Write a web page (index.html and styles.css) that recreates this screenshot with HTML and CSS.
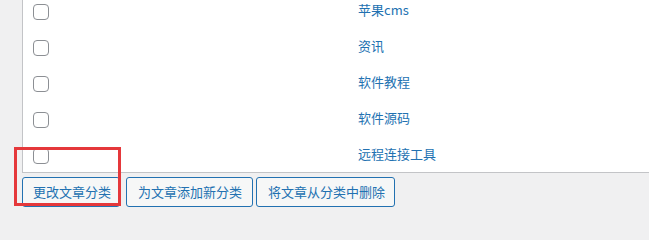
FILE: index.html
```html
<!DOCTYPE html>
<html lang="zh-CN">
<head>
<meta charset="utf-8">
<title>分类</title>
<link rel="stylesheet" href="styles.css">
</head>
<body>
<div class="page">
  <div class="panel">
    <ul class="list">
      <li class="row"><span class="cb"></span><span class="label">苹果cms</span></li>
      <li class="row"><span class="cb"></span><span class="label">资讯</span></li>
      <li class="row"><span class="cb"></span><span class="label">软件教程</span></li>
      <li class="row"><span class="cb"></span><span class="label">软件源码</span></li>
      <li class="row"><span class="cb"></span><span class="label">远程连接工具</span></li>
    </ul>
  </div>
  <div class="actions">
    <button class="btn btn-first">更改文章分类</button>
    <button class="btn btn-second">为文章添加新分类</button>
    <button class="btn btn-third">将文章从分类中删除</button>
  </div>
  <div class="highlight"></div>
</div>
</body>
</html>
```
FILE: styles.css
```css
html, body {
  margin: 0;
  padding: 0;
  background: #f0f0f1;
  overflow: hidden;
  width: 649px;
  height: 230px;
}
body {
  font-family: "Noto Sans CJK SC", "Noto Sans", sans-serif;
  font-size: 13px;
}
.page {
  position: relative;
  padding-left: 22px;
}
.panel {
  margin-top: -6px;
  height: 178px;
  background: #fff;
  border-left: 1px solid #c3c4c7;
  border-bottom: 1px solid #c3c4c7;
  overflow: hidden;
}
.list {
  list-style: none;
  margin: 0;
  padding: 0;
}
.row {
  display: grid;
  grid-template-columns: 16px auto;
  column-gap: 309px;
  align-items: center;
  height: 36px;
  padding-left: 10px;
}
.cb {
  display: block;
  width: 14px;
  height: 14px;
  border: 1px solid #8c8f94;
  border-radius: 4px;
  background: #fff;
}
.label {
  color: #2271b1;
  line-height: 16px;
  margin-bottom: 5px;
}
.actions {
  display: flex;
  margin-top: 4px;
}
.btn {
  font-family: inherit;
  font-size: 13px;
  color: #2271b1;
  background: #f6f7f7;
  border: 1px solid #2271b1;
  border-radius: 3px;
  height: 30px;
  line-height: 28px;
  padding: 0 10px 0 11px;
  margin: 0;
}
.btn-first {
  padding: 0 8px 0 10px;
}
.btn-second {
  margin-left: 6px;
}
.btn-third {
  margin-left: 3px;
  padding-right: 9px;
}
.highlight {
  position: absolute;
  left: 14px;
  top: 153px;
  width: 101px;
  height: 53px;
  border: 3px solid #e5383b;
}
```
